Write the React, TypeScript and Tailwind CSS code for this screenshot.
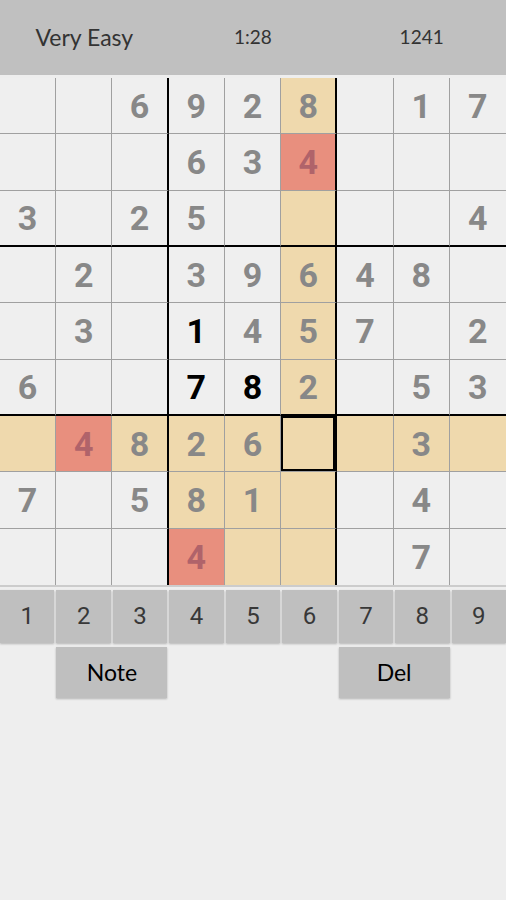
const board: (number | null)[][] = [
  [null, null, 6, 9, 2, 8, null, 1, 7],
  [null, null, null, 6, 3, 4, null, null, null],
  [3, null, 2, 5, null, null, null, null, 4],
  [null, 2, null, 3, 9, 6, 4, 8, null],
  [null, 3, null, 1, 4, 5, 7, null, 2],
  [6, null, null, 7, 8, 2, null, 5, 3],
  [null, 4, 8, 2, 6, null, null, 3, null],
  [7, null, 5, 8, 1, null, null, 4, null],
  [null, null, null, 4, null, null, null, 7, null],
]

// cells the player filled in (shown black)
const userCells = ["4-3", "5-3", "5-4"]
const conflictCells = ["1-5", "6-1", "8-3"]
const selected = { r: 6, c: 5 }

function Cell({ r, c, value }: { r: number; c: number; value: number | null }) {
  const key = `${r}-${c}`
  const conflict = conflictCells.includes(key)
  const inBox = Math.floor(r / 3) === Math.floor(selected.r / 3) && Math.floor(c / 3) === Math.floor(selected.c / 3)
  const related = r === selected.r || c === selected.c || inBox
  const isSel = r === selected.r && c === selected.c

  const bg = conflict ? "bg-[#e88f7e]" : related ? "bg-[#efd9ad]" : "bg-[#efefef]"
  const right =
    c === 2 || c === 5 ? "border-r-2 border-r-black" : c < 8 ? "border-r border-r-[#a0a0a0]" : ""
  const bottom =
    r === 2 || r === 5 ? "border-b-2 border-b-black" : r < 8 ? "border-b border-b-[#a0a0a0]" : ""
  const color = conflict ? "text-[#b0636a]" : userCells.includes(key) ? "text-black" : "text-[#888888]"

  return (
    <div
      className={`flex items-center justify-center h-[56.33px] ${bg} ${right} ${bottom} ${
        isSel ? "ring-2 ring-inset ring-black" : ""
      }`}
    >
      {value !== null && (
        <span className={`font-['Roboto',sans-serif] font-bold text-[34px] leading-none ${color}`}>{value}</span>
      )}
    </div>
  )
}

export default function App() {
  return (
    <div className="w-[506px] h-[900px] bg-[#eeeeee] overflow-hidden">
      {/* Header */}
      <div className="grid grid-cols-3 items-center h-[75px] bg-[#c0c0c0] text-[#333333] font-['Lato',sans-serif]">
        <span className="text-center text-[23px]">Very Easy</span>
        <span className="text-center text-[19px]">1:28</span>
        <span className="text-center text-[19px]">1241</span>
      </div>

      {/* Board */}
      <div className="mt-[3px] grid grid-cols-9 border-b-2 border-b-[#cccccc]">
        {board.map((row, r) => row.map((v, c) => <Cell key={`${r}-${c}`} r={r} c={c} value={v} />))}
      </div>

      {/* Number pad */}
      <div className="mt-[3px] grid grid-cols-9 gap-x-[2px] gap-y-[4px]">
        {[1, 2, 3, 4, 5, 6, 7, 8, 9].map((n) => (
          <button
            key={n}
            className="h-[53px] bg-[#bfbfbf] shadow-[0_1px_2px_rgba(0,0,0,0.25)] text-[#383838] text-[24px] font-['Roboto',sans-serif]"
          >
            {n}
          </button>
        ))}
        <button className="col-start-2 col-span-2 h-[51px] bg-[#bfbfbf] shadow-[0_1px_2px_rgba(0,0,0,0.25)] text-black text-[23px] font-['Lato',sans-serif]">
          Note
        </button>
        <button className="col-start-7 col-span-2 h-[51px] bg-[#bfbfbf] shadow-[0_1px_2px_rgba(0,0,0,0.25)] text-black text-[23px] font-['Lato',sans-serif]">
          Del
        </button>
      </div>
    </div>
  )
}
